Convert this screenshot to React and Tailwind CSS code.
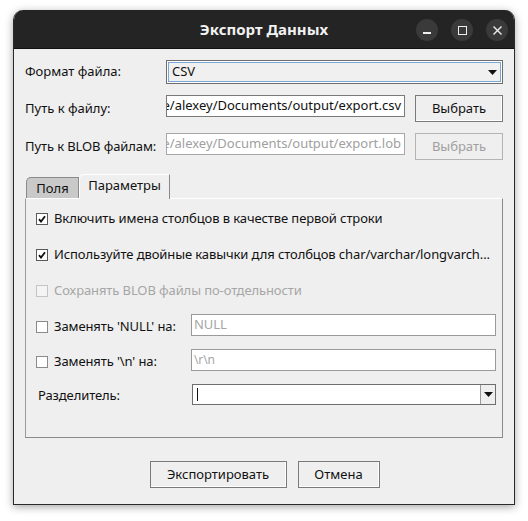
import React from 'react';

const font = { fontFamily: '"Noto Sans", "Open Sans", sans-serif' };

const Check = ({ checked, disabled }) => (
  <span
    className={`flex h-[12px] w-[12px] shrink-0 items-center justify-center border ${
      disabled ? 'border-[#c4c4c4] bg-[#f4f4f4]' : checked ? 'border-[#5a5a5a] bg-white' : 'border-[#8a8a8a] bg-white'
    }`}
  >
    {checked && (
      <svg width="8" height="8" viewBox="0 0 8 8">
        <path d="M1 4.2 L3 6.6 L7 1.2" stroke="#111" strokeWidth="1.8" fill="none" />
      </svg>
    )}
  </span>
);

const Btn = ({ children, disabled, className = '' }) => (
  <div
    className={`flex items-center justify-center border bg-[#efefef] text-[13px] ${
      disabled ? 'border-[#b4b4b4] text-[#a0a0a0]' : 'border-[#7a7a7a] text-[#111] shadow-[inset_-1px_-1px_0_#ffffff]'
    } ${className}`}
  >
    {children}
  </div>
);

const Arrow = () => (
  <svg width="9" height="5" viewBox="0 0 9 5">
    <path d="M0 0 H9 L4.5 5 Z" fill="#111" />
  </svg>
);

const PathInput = ({ text, disabled }) => (
  <div
    className={`flex h-[22px] w-[239px] items-center justify-end overflow-hidden whitespace-nowrap border bg-white pr-[3px] text-[13px] ${
      disabled ? 'border-[#a8a8a8] text-[#a0a0a0]' : 'border-[#7a7a7a] text-[#111]'
    }`}
  >
    {text}
  </div>
);

export default function App() {
  return (
    <div className="h-[521px] w-[528px] bg-white pl-[13px] pt-[10px]" style={font}>
      <div className="flex h-[495px] w-[502px] flex-col overflow-hidden rounded-t-[10px] border-x border-b border-[#2a2a2a] bg-[#efefef] shadow-[0_2px_8px_rgba(0,0,0,0.35)]">
        {/* title bar */}
        <div className="relative flex h-[39px] shrink-0 items-center justify-center border-b border-[#111] bg-[#242424]">
          <span className="text-[15px] font-bold text-[#f2f2f2]">Экспорт Данных</span>
          <div className="absolute right-[6px] top-[9px] flex gap-[13px]">
            <div className="flex h-[22px] w-[22px] items-center justify-center rounded-full bg-[#3a3a3a]">
              <div className="mt-[6px] h-[1.5px] w-[8px] bg-[#eee]" />
            </div>
            <div className="flex h-[22px] w-[22px] items-center justify-center rounded-full bg-[#3a3a3a]">
              <div className="h-[9px] w-[9px] border-[1.5px] border-[#eee]" />
            </div>
            <div className="flex h-[22px] w-[22px] items-center justify-center rounded-full bg-[#3a3a3a]">
              <svg width="9" height="9" viewBox="0 0 9 9">
                <path d="M0.5 0.5 L8.5 8.5 M8.5 0.5 L0.5 8.5" stroke="#eee" strokeWidth="1.4" />
              </svg>
            </div>
          </div>
        </div>

        {/* form */}
        <div className="flex flex-col whitespace-nowrap pl-[11px] pr-[11px] pt-[11px] text-[13px] text-[#111]">
          <div className="flex h-[24px] items-center">
            <span className="w-[141px]">Формат файла:</span>
            <div className="flex h-[24px] flex-1 items-center justify-between border border-[#6e6e6e] bg-[#f0f0f0] pl-[5px] pr-[5px] shadow-[inset_0_0_0_1px_#ffffff,inset_0_0_0_2px_#7aa6d8]">
              <span>CSV</span>
              <Arrow />
            </div>
          </div>

          <div className="mt-[11px] flex h-[27px] items-start">
            <span className="mt-[4px] w-[141px]">Путь к файлу:</span>
            <PathInput text="/home/alexey/Documents/output/export.csv" />
            <Btn className="ml-[10px] h-[27px] w-[88px]">Выбрать</Btn>
          </div>

          <div className="mt-[11px] flex h-[27px] items-start">
            <span className="mt-[4px] w-[141px] tracking-[-0.1px]">Путь к BLOB файлам:</span>
            <PathInput text="/home/alexey/Documents/output/export.lob" disabled />
            <Btn disabled className="ml-[10px] h-[27px] w-[88px]">
              Выбрать
            </Btn>
          </div>

          {/* tabs */}
          <div className="ml-[-1px] mt-[14px] flex items-end">
            <div className="ml-[2px] flex h-[21px] w-[53px] items-center justify-center rounded-tl-[5px] border border-b-0 border-[#8a8a8a] bg-[#c9c9c9] pt-[1px]">
              Поля
            </div>
            <div className="relative z-10 mb-[-1px] flex h-[25px] w-[91px] items-center justify-center rounded-tl-[5px] border border-b-0 border-[#8a8a8a] border-t-white border-l-white bg-[#efefef] pb-[2px]">
              Параметры
            </div>
          </div>
          <div className="flex h-[240px] flex-col border border-[#8a8a8a] border-t-white border-l-[#9a9a9a] pl-[10px] pr-[6px] tracking-[-0.1px]">
            <div className="mt-[13px] flex h-[14px] items-center gap-[6px]">
              <Check checked />
              <span>Включить имена столбцов в качестве первой строки</span>
            </div>
            <div className="mt-[22px] flex h-[14px] items-center gap-[6px]">
              <Check checked />
              <span>Используйте двойные кавычки для столбцов char/varchar/longvarch...</span>
            </div>
            <div className="mt-[22px] flex h-[14px] items-center gap-[6px] text-[#a6a6a6]">
              <Check disabled />
              <span>Сохранять BLOB файлы по-отдельности</span>
            </div>
            <div className="mt-[16px] flex h-[22px] items-center">
              <div className="flex w-[156px] items-center gap-[6px] pt-[4px]">
                <Check />
                <span>Заменять 'NULL' на:</span>
              </div>
              <div className="flex h-[22px] w-[307px] items-center border border-[#9a9a9a] bg-white pl-[2px] text-[#a6a6a6]">
                NULL
              </div>
            </div>
            <div className="mt-[13px] flex h-[22px] items-center">
              <div className="flex w-[156px] items-center gap-[6px] pt-[4px]">
                <Check />
                <span>Заменять '\n' на:</span>
              </div>
              <div className="flex h-[22px] w-[307px] items-center border border-[#9a9a9a] bg-white pl-[2px] text-[12px] text-[#a6a6a6]">
                \r\n
              </div>
            </div>
            <div className="mt-[13px] flex h-[21px] items-center">
              <span className="ml-[2px] w-[154px] pt-[3px]">Разделитель:</span>
              <div className="flex h-[21px] w-[304px] items-stretch border border-[#6e6e6e] bg-white">
                <div className="flex flex-1 items-center pl-[4px]">
                  <div className="h-[13px] w-[1px] bg-[#111]" />
                </div>
                <div className="flex w-[15px] items-center justify-center border-l border-[#9a9a9a] bg-[#efefef]">
                  <Arrow />
                </div>
              </div>
            </div>
          </div>

          {/* footer buttons */}
          <div className="mt-[23px] flex justify-center gap-[11px] pl-[1px]">
            <Btn className="h-[27px] w-[137px]">Экспортировать</Btn>
            <Btn className="h-[27px] w-[82px]">Отмена</Btn>
          </div>
        </div>
      </div>
    </div>
  );
}
